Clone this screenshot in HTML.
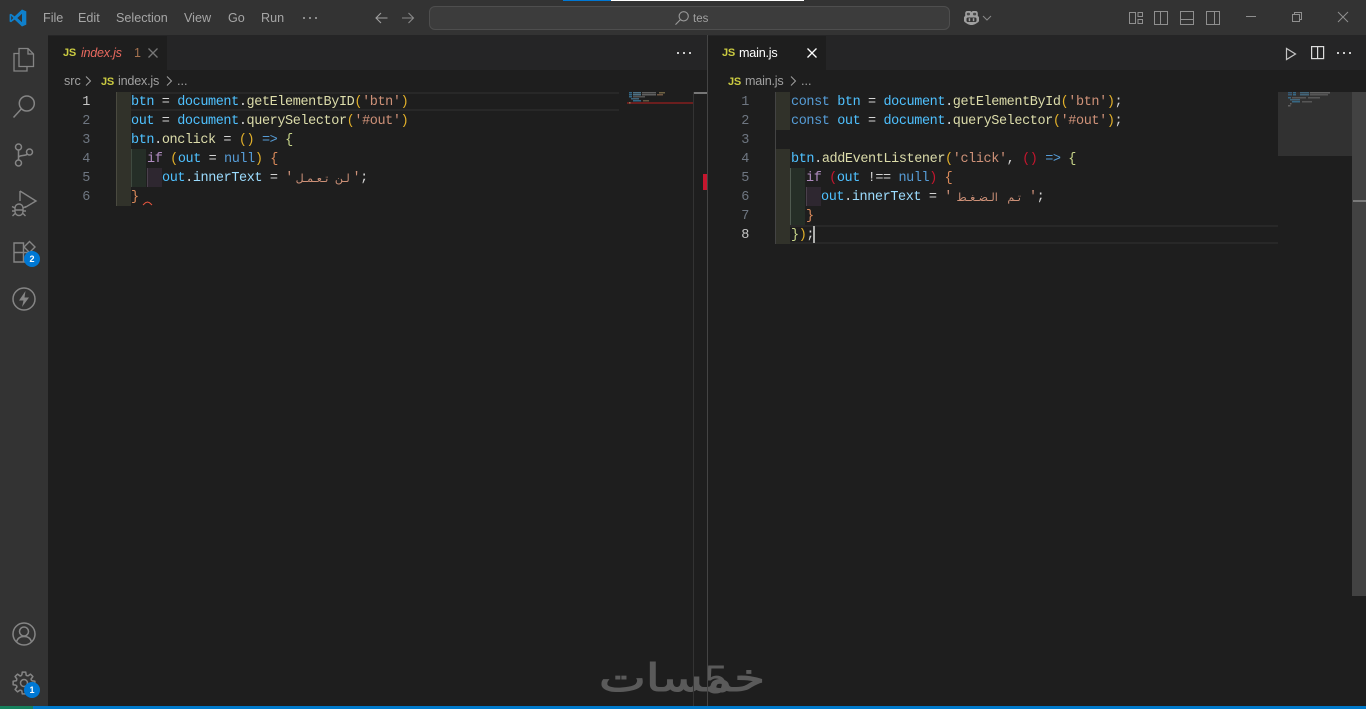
<!DOCTYPE html>
<html lang="en"><head><meta charset="utf-8"><title>VS Code</title>
<style>
html,body{margin:0;padding:0;background:#1e1e1e;width:1366px;height:709px;overflow:hidden}
#r{position:relative;width:1366px;height:709px;overflow:hidden;font-family:"Liberation Sans",sans-serif;font-size:12.6px;color:#a6a6a6}
.a{position:absolute}
.t{position:absolute;white-space:pre;line-height:18px}
.c{position:absolute;white-space:pre;font-family:"Liberation Mono",monospace;font-size:13.5px;letter-spacing:-.4px;line-height:19px;height:19px;color:#d4d4d4;margin-top:1px}
.n{position:absolute;width:30px;text-align:right;font-family:"Liberation Mono",monospace;font-size:13.5px;letter-spacing:-.4px;line-height:19px;color:#6e7681;margin-top:1px}
.ar{display:inline-block;box-sizing:border-box;font-family:"DejaVu Sans",sans-serif;font-size:11.5px;letter-spacing:0;color:#ce9178;text-align:center;vertical-align:top;height:19px;overflow:hidden}
.v{color:#4fc1ff}.p{color:#9cdcfe}.f{color:#dcdcaa}.k{color:#569cd6}.s{color:#ce9178}.g{color:#e2b02a}.r{color:#c5162e}.o{color:#d9895a}.y{color:#c9d68a}.m{color:#b08cc0}.w{color:#d4d4d4}
.js{position:absolute;font:bold 11px/12px "Liberation Sans",sans-serif;color:#cbcb41;letter-spacing:-.3px}
svg{position:absolute;overflow:visible;fill:none}
.b{position:absolute;border-radius:50%;background:#0078d4;color:#fff;width:16px;height:16px;text-align:center;font:bold 9px/16px "Liberation Sans",sans-serif}
</style></head><body><div id="r">
<!-- chrome -->
<div class="a" style="left:0;top:0;width:1366px;height:35px;background:#333"></div>
<div class="a" style="left:0;top:35px;width:48px;height:671px;background:#333"></div>
<div class="a" style="left:48px;top:35px;width:1318px;height:35px;background:#252526"></div>
<div class="a" style="left:48px;top:36px;width:119px;height:34px;background:#1e1e1e"></div>
<div class="a" style="left:708px;top:36px;width:118px;height:34px;background:#1e1e1e"></div>
<div class="a" style="left:707px;top:35px;width:1px;height:671px;background:#444"></div>
<div class="a" style="left:0;top:706px;width:1366px;height:3px;background:#007acc"></div>
<div class="a" style="left:0;top:706px;width:33px;height:3px;background:#16825d"></div>
<div class="a" style="left:563px;top:0;width:48px;height:1px;background:#0078d4"></div>
<div class="a" style="left:611px;top:0;width:193px;height:1px;background:#fff"></div>

<!-- logo -->
<svg style="left:9px;top:9px" width="18" height="18" viewBox="0 0 18 18"><path d="M13 .5 17.300 2.400V15.600L13 17.500 5.600 10.600 2 13.300.6 12.600V5.400L2 4.700 5.600 7.400Z" fill="#0f80cc"/><path d="M13 4.800 8.300 9 13 13.200Z" fill="#333"/><path d="M2.200 6.700V11.300L4.300 9Z" fill="#333"/></svg>

<!-- menu -->
<div class="t" style="left:43px;top:9px">File</div>
<div class="t" style="left:78px;top:9px">Edit</div>
<div class="t" style="left:116px;top:9px">Selection</div>
<div class="t" style="left:184px;top:9px">View</div>
<div class="t" style="left:228px;top:9px">Go</div>
<div class="t" style="left:261px;top:9px">Run</div>
<svg style="left:303px;top:17px" width="14" height="3"><g fill="#8c8c8c"><rect x="0" y="0" width="2" height="2"/><rect x="6" y="0" width="2" height="2"/><rect x="12" y="0" width="2" height="2"/></g></svg>

<svg style="left:375px;top:11px" width="14" height="14" viewBox="0 0 14 14" stroke="#a0a0a0" stroke-width="1.100"><path d="M12.500 7H1M6 2 1 7l5 5"/></svg>
<svg style="left:401px;top:11px" width="14" height="14" viewBox="0 0 14 14" stroke="#8a8a8a" stroke-width="1.100"><path d="M1 7h11.500M7.500 2l5 5-5 5"/></svg>

<!-- search -->
<div class="a" style="left:429px;top:6px;width:519px;height:22px;background:#3c3c3c;border:1px solid #4e4e4e;border-radius:6px"></div>
<svg style="left:674px;top:10px" width="16" height="16" viewBox="0 0 16 16" stroke="#999" stroke-width="1.100"><circle cx="9.700" cy="6.300" r="4.600"/><path d="M6.400 9.600 1.500 14.600"/></svg>
<div class="t" style="left:693px;top:10px;font-size:11.500px;color:#a0a0a0">tes</div>

<!-- copilot -->
<svg style="left:963px;top:10px" width="17" height="16" viewBox="0 0 17 16"><path d="M4.500 1h2.300c.8 0 1.300.4 1.700 1 .4-.6.900-1 1.700-1h2.300c1.500 0 2.300 1 2.300 2.400v2.600c.8.400 1.200 1 1.200 1.800v3c0 .6-.3 1-.8 1.300C13.500 13.500 11 15 8.500 15S3.500 13.500 1.800 12.100C1.300 11.800 1 11.400 1 10.800v-3C1 7 1.400 6.400 2.200 6V3.400C2.200 2 3 1 4.500 1Z" fill="#a0a0a0"/><rect x="3.800" y="2.800" width="3.200" height="2.600" rx="1" fill="#4a4a4a"/><rect x="10" y="2.800" width="3.200" height="2.600" rx="1" fill="#4a4a4a"/><rect x="3.500" y="7.500" width="10" height="4.500" rx="1.500" fill="#333"/><rect x="5.700" y="8.200" width="1.500" height="3" fill="#a0a0a0"/><rect x="9.800" y="8.200" width="1.500" height="3" fill="#a0a0a0"/></svg>
<svg style="left:982px;top:15px" width="10" height="6" viewBox="0 0 10 6" stroke="#8a8a8a"><path d="M1 1l4 4 4-4"/></svg>

<!-- layout icons -->
<svg style="left:1129px;top:11px" width="14" height="14" viewBox="0 0 14 14" stroke="#8f8f8f"><rect x=".5" y="1.500" width="6" height="11"/><rect x="9" y="1.500" width="4.500" height="4"/><rect x="9" y="8.500" width="4.500" height="4"/></svg>
<svg style="left:1154px;top:11px" width="14" height="14" viewBox="0 0 14 14" stroke="#8f8f8f"><rect x=".5" y=".5" width="13" height="13"/><path d="M6.500 .5v13"/></svg>
<svg style="left:1180px;top:11px" width="14" height="14" viewBox="0 0 14 14" stroke="#8f8f8f"><rect x=".5" y=".5" width="13" height="13"/><path d="M.5 8.500h13"/></svg>
<svg style="left:1206px;top:11px" width="14" height="14" viewBox="0 0 14 14" stroke="#8f8f8f"><rect x=".5" y=".5" width="13" height="13"/><path d="M8.500 .5v13"/></svg>
<!-- window buttons -->
<svg style="left:1246px;top:16px" width="10" height="2"><path d="M0 .5h10" stroke="#8f8f8f"/></svg>
<svg style="left:1292px;top:12px" width="10" height="10" viewBox="0 0 10 10" stroke="#8f8f8f"><rect x=".5" y="2.500" width="7" height="7"/><path d="M2.500 2.500V.5h7v7h-2"/></svg>
<svg style="left:1338px;top:12px" width="10" height="10" viewBox="0 0 10 10" stroke="#8f8f8f"><path d="M0 0l10 10M10 0 0 10"/></svg>

<!-- activity bar -->
<svg style="left:12px;top:46px" width="24" height="26" viewBox="0 0 24 26" stroke="#858585" stroke-width="1.300"><path d="M7 2.500h9l5.500 5.500v12.500H7Z" fill="#333"/><path d="M16 2.500V8h5.500"/><path d="M7 7.500H2V25h13v-4.500"/></svg>
<svg style="left:12px;top:94px" width="24" height="25" viewBox="0 0 24 25" stroke="#858585" stroke-width="1.500"><circle cx="14.800" cy="9.500" r="7.500"/><path d="M9.500 14.800 1.500 23.500"/></svg>
<svg style="left:12px;top:142px" width="24" height="26" viewBox="0 0 24 26" stroke="#858585" stroke-width="1.500"><circle cx="6.500" cy="5" r="3"/><circle cx="6.500" cy="21" r="3"/><circle cx="17.500" cy="10" r="3"/><path d="M6.500 8v10M6.500 15.500c1-3 7-1 9-3.500"/></svg>
<svg style="left:11px;top:190px" width="26" height="28" viewBox="0 0 26 28" stroke="#858585" stroke-width="1.400"><path d="M9 1v10M9 1l16 10-11 6.500"/><path d="M4 18a4 4 0 0 1 8 0v3.500a4 4 0 0 1-8 0Z"/><path d="M1 16.500 4 18M15 16.500 12 18M1 21h3M12 21h3M1.500 26 4 23.500M14.500 26 12 23.500M4.500 20h7"/></svg>
<svg style="left:13px;top:240px" width="24" height="24" viewBox="0 0 24 24" stroke="#858585" stroke-width="1.400"><path d="M1 3h9.500v19H1ZM1 12.500h19.500V22h-10"/><path d="M16.500 1.500 22 7l-5.500 5.500L11 7Z"/></svg>
<div class="b" style="left:24px;top:251px">2</div>
<svg style="left:12px;top:287px" width="24" height="24" viewBox="0 0 24 24"><circle cx="12" cy="12" r="11" stroke="#858585" stroke-width="1.500"/><path d="M13.500 4 7 13.500h4.500L10 20l7-9.500h-4.500Z" fill="#858585"/></svg>
<svg style="left:12px;top:622px" width="24" height="24" viewBox="0 0 24 24" stroke="#858585" stroke-width="1.500"><circle cx="12" cy="12" r="11"/><circle cx="12" cy="9.500" r="4.500"/><path d="M4.500 20c1-4 4-5.500 7.500-5.500s6.500 1.500 7.500 5.500"/></svg>
<svg style="left:12px;top:671px" width="24" height="24" viewBox="0 0 24 24" stroke="#858585" stroke-width="1.500" stroke-linejoin="round">
<g><path d="M19.690 9.790 22.860 10.280V13.720L19.690 14.210 19 15.880"/><path transform="rotate(45 12 12)" d="M19.690 9.790 22.860 10.280V13.720L19.690 14.210 19 15.880"/><path transform="rotate(90 12 12)" d="M19.690 9.790 22.860 10.280V13.720L19.690 14.210 19 15.880"/><path transform="rotate(135 12 12)" d="M19.690 9.790 22.860 10.280V13.720L19.690 14.210 19 15.880"/><path transform="rotate(180 12 12)" d="M19.690 9.790 22.860 10.280V13.720L19.690 14.210 19 15.880"/><path transform="rotate(225 12 12)" d="M19.690 9.790 22.860 10.280V13.720L19.690 14.210 19 15.880"/><path transform="rotate(270 12 12)" d="M19.690 9.790 22.860 10.280V13.720L19.690 14.210 19 15.880"/><path transform="rotate(315 12 12)" d="M19.690 9.790 22.860 10.280V13.720L19.690 14.210 19 15.880"/></g>
<circle cx="12" cy="12" r="3.500"/></svg>
<div class="b" style="left:24px;top:682px">1</div>

<!-- tabs left -->
<div class="js" style="left:63px;top:47px">JS</div>
<div class="t" style="left:81px;top:44px;font-style:italic;color:#e8695f;letter-spacing:-.25px">index.js</div>
<div class="t" style="left:134px;top:44px;color:#a5724f;font-size:12.500px">1</div>
<svg style="left:148px;top:48px" width="10" height="10" viewBox="0 0 10 10" stroke="#777" stroke-width="1.300"><path d="M.5.5l9 9M9.500.5l-9 9"/></svg>
<svg style="left:677px;top:52px" width="14" height="2"><g fill="#ccc"><rect width="2" height="2"/><rect x="6" width="2" height="2"/><rect x="12" width="2" height="2"/></g></svg>
<!-- tabs right -->
<div class="js" style="left:722px;top:47px">JS</div>
<div class="t" style="left:739px;top:44px;color:#fff;letter-spacing:-.2px">main.js</div>
<svg style="left:807px;top:48px" width="10" height="10" viewBox="0 0 10 10" stroke="#fff" stroke-width="1.300"><path d="M.5.5l9 9M9.500.5l-9 9"/></svg>
<svg style="left:1285px;top:47px" width="12" height="14" viewBox="0 0 12 14" stroke="#c5c5c5" stroke-width="1.200"><path d="M1.500 1.500v11l9-5.500Z"/></svg>
<svg style="left:1311px;top:46px" width="14" height="14" viewBox="0 0 14 14" stroke="#ddd" stroke-width="1.200"><rect x=".6" y=".6" width="12" height="12"/><path d="M6.600 .6v12"/></svg>
<svg style="left:1337px;top:52px" width="14" height="2"><g fill="#ccc"><rect width="2" height="2"/><rect x="6" width="2" height="2"/><rect x="12" width="2" height="2"/></g></svg>

<!-- breadcrumbs -->
<div class="t" style="left:64px;top:72px;color:#a0a0a0">src</div>
<svg style="left:85px;top:76px" width="6" height="10" viewBox="0 0 6 10" stroke="#a0a0a0"><path d="M1 .5 5.500 5 1 9.500"/></svg>
<div class="js" style="left:101px;top:76px">JS</div>
<div class="t" style="left:118px;top:72px;color:#a0a0a0;letter-spacing:-.2px">index.js</div>
<svg style="left:166px;top:76px" width="6" height="10" viewBox="0 0 6 10" stroke="#a0a0a0"><path d="M1 .5 5.500 5 1 9.500"/></svg>
<div class="t" style="left:177px;top:72px;color:#a0a0a0">...</div>
<div class="js" style="left:728px;top:76px">JS</div>
<div class="t" style="left:745px;top:72px;color:#a0a0a0;letter-spacing:-.2px">main.js</div>
<svg style="left:790px;top:76px" width="6" height="10" viewBox="0 0 6 10" stroke="#a0a0a0"><path d="M1 .5 5.500 5 1 9.500"/></svg>
<div class="t" style="left:801px;top:72px;color:#a0a0a0">...</div>

<!-- current line borders -->
<div class="a" style="left:116px;top:92px;width:503px;height:2px;background:#282828"></div>
<div class="a" style="left:116px;top:109px;width:503px;height:2px;background:#282828"></div>
<div class="a" style="left:775px;top:225px;width:503px;height:2px;background:#282828"></div>
<div class="a" style="left:775px;top:242px;width:503px;height:2px;background:#282828"></div>

<!-- indent bands left -->
<div class="a" style="left:116px;top:92px;width:15px;height:114px;background:#31322a"></div>
<div class="a" style="left:116px;top:92px;width:1px;height:114px;background:#4a4a40"></div>
<div class="a" style="left:131px;top:149px;width:15px;height:38px;background:#252e27"></div>
<div class="a" style="left:131px;top:149px;width:1px;height:38px;background:#3f4a40"></div>
<div class="a" style="left:147px;top:168px;width:15px;height:19px;background:#2e2730"></div>
<div class="a" style="left:147px;top:168px;width:1px;height:19px;background:#4a404c"></div>
<!-- indent bands right -->
<div class="a" style="left:775px;top:92px;width:1px;height:152px;background:#444"></div>
<div class="a" style="left:776px;top:92px;width:14px;height:38px;background:#31322a"></div>
<div class="a" style="left:776px;top:149px;width:14px;height:95px;background:#31322a"></div>
<div class="a" style="left:790px;top:168px;width:15px;height:57px;background:#252e27"></div>
<div class="a" style="left:790px;top:168px;width:1px;height:57px;background:#4f5a50"></div>
<div class="a" style="left:806px;top:187px;width:15px;height:19px;background:#2e2730"></div>
<div class="a" style="left:806px;top:187px;width:1px;height:19px;background:#4a404c"></div>

<!-- line numbers left -->
<div class="n" style="left:60px;top:92px;color:#c6c6c6">1</div>
<div class="n" style="left:60px;top:111px">2</div>
<div class="n" style="left:60px;top:130px">3</div>
<div class="n" style="left:60px;top:149px">4</div>
<div class="n" style="left:60px;top:168px">5</div>
<div class="n" style="left:60px;top:187px">6</div>
<!-- code left -->
<div class="c" style="left:131px;top:92px"><span class="v">btn</span> = <span class="v">document</span>.<span class="f">getElementByID</span><span class="g">(</span><span class="s">'btn'</span><span class="g">)</span></div>
<div class="c" style="left:131px;top:111px"><span class="v">out</span> = <span class="v">document</span>.<span class="f">querySelector</span><span class="g">(</span><span class="s">'#out'</span><span class="g">)</span></div>
<div class="c" style="left:131px;top:130px"><span class="v">btn</span>.<span class="f">onclick</span> = <span class="g">()</span> <span class="k">=&gt;</span> <span class="y">{</span></div>
<div class="c" style="left:147px;top:149px"><span class="m">if</span> <span class="g">(</span><span class="v">out</span> = <span class="k">null</span><span class="g">)</span> <span class="o">{</span></div>
<div class="c" style="left:162px;top:168px"><span class="v">out</span>.<span class="p">innerText</span> = <span class="s">'</span><span class="ar" style="width:59.500px;word-spacing:3px;font-size:11px" dir="rtl">لـن تـعـمـل</span><span class="s">'</span>;</div>
<div class="c" style="left:131px;top:187px"><span class="o">}</span></div>
<svg style="left:143px;top:202px" width="9" height="3" viewBox="0 0 9 3" stroke="#e8563f"><path d="M0 3 2.500 .7 4.500 0 6.500 .7 9 3"/></svg>

<!-- minimap left -->
<div class="a" style="left:627px;top:102px;width:66px;height:2px;background:#6b1e1e"></div>
<svg style="left:629px;top:92px" width="40" height="14" viewBox="0 0 40 14"><g opacity=".75"><rect x="0" y="0" width="3" height="1.500" fill="#3a80a8"/><rect x="4" y="0" width="8" height="1.500" fill="#5e8fa8"/><rect x="13" y="0" width="14" height="1.500" fill="#777"/><rect x="30" y="0" width="6" height="1.500" fill="#8a7a50"/><rect x="0" y="2" width="3" height="1.500" fill="#3a80a8"/><rect x="4" y="2" width="8" height="1.500" fill="#5e8fa8"/><rect x="13" y="2" width="14" height="1.500" fill="#777"/><rect x="28" y="2" width="6" height="1.500" fill="#8a6a50"/><rect x="0" y="4" width="3" height="1.500" fill="#3a80a8"/><rect x="4" y="4" width="12" height="1.500" fill="#666"/><rect x="2" y="6" width="8" height="1.500" fill="#4a7a96"/><rect x="4" y="8" width="8" height="1.500" fill="#3a80a8"/><rect x="14" y="8" width="6" height="1.500" fill="#7a6a50"/><rect x="0" y="10" width="1.500" height="1.500" fill="#996"/></g></svg>
<!-- scrollbar left -->
<div class="a" style="left:693px;top:92px;width:1px;height:614px;background:#333"></div>
<div class="a" style="left:694px;top:92px;width:13px;height:2px;background:#777"></div>
<div class="a" style="left:703px;top:174px;width:4px;height:16px;background:#c5162e"></div>

<!-- line numbers right -->
<div class="n" style="left:719px;top:92px">1</div>
<div class="n" style="left:719px;top:111px">2</div>
<div class="n" style="left:719px;top:130px">3</div>
<div class="n" style="left:719px;top:149px">4</div>
<div class="n" style="left:719px;top:168px">5</div>
<div class="n" style="left:719px;top:187px">6</div>
<div class="n" style="left:719px;top:206px">7</div>
<div class="n" style="left:719px;top:225px;color:#c6c6c6">8</div>
<!-- code right -->
<div class="c" style="left:791px;top:92px"><span class="k">const</span> <span class="v">btn</span> = <span class="v">document</span>.<span class="f">getElementById</span><span class="g">(</span><span class="s">'btn'</span><span class="g">)</span>;</div>
<div class="c" style="left:791px;top:111px"><span class="k">const</span> <span class="v">out</span> = <span class="v">document</span>.<span class="f">querySelector</span><span class="g">(</span><span class="s">'#out'</span><span class="g">)</span>;</div>
<div class="c" style="left:791px;top:149px"><span class="v">btn</span>.<span class="f">addEventListener</span><span class="g">(</span><span class="s">'click'</span>, <span class="r">()</span> <span class="k">=&gt;</span> <span class="y">{</span></div>
<div class="c" style="left:806px;top:168px"><span class="m">if</span> <span class="r">(</span><span class="v">out</span> !== <span class="k">null</span><span class="r">)</span> <span class="o">{</span></div>
<div class="c" style="left:821px;top:187px"><span class="v">out</span>.<span class="p">innerText</span> = <span class="s">'</span><span class="ar" style="width:77px;word-spacing:6px;font-size:11px;padding-right:8px;text-align:right" dir="rtl">تـم الـضـغـط</span><span class="s">'</span>;</div>
<div class="c" style="left:806px;top:206px"><span class="o">}</span></div>
<div class="c" style="left:791px;top:225px"><span class="y">}</span><span class="g">)</span>;</div>
<div class="a" style="left:813px;top:226px;width:2px;height:17px;background:#aeafad"></div>

<!-- minimap right -->
<div class="a" style="left:1278px;top:92px;width:74px;height:64px;background:#313131"></div>
<svg style="left:1288px;top:92px" width="44" height="16" viewBox="0 0 44 16"><g opacity=".7"><rect x="0" y="0" width="4" height="1.500" fill="#3a6a90"/><rect x="5" y="0" width="3" height="1.500" fill="#3a80a8"/><rect x="12" y="0" width="9" height="1.500" fill="#4a7a96"/><rect x="22" y="0" width="20" height="1.500" fill="#777"/><rect x="0" y="2" width="4" height="1.500" fill="#3a6a90"/><rect x="5" y="2" width="3" height="1.500" fill="#3a80a8"/><rect x="12" y="2" width="9" height="1.500" fill="#4a7a96"/><rect x="22" y="2" width="18" height="1.500" fill="#666"/><rect x="0" y="5" width="3" height="1.500" fill="#3a80a8"/><rect x="4" y="5" width="14" height="1.500" fill="#666"/><rect x="20" y="5" width="12" height="1.500" fill="#666"/><rect x="2" y="7" width="10" height="1.500" fill="#4a7a96"/><rect x="4" y="9" width="8" height="1.500" fill="#3a80a8"/><rect x="14" y="9" width="10" height="1.500" fill="#666"/><rect x="2" y="11" width="1.500" height="1.500" fill="#777"/><rect x="0" y="13" width="2.500" height="1.500" fill="#777"/></g></svg>
<!-- scrollbar right -->
<div class="a" style="left:1352px;top:92px;width:14px;height:504px;background:#424242"></div>
<div class="a" style="left:1353px;top:200px;width:13px;height:2px;background:#7a7a7a"></div>

<!-- watermark -->
<svg style="left:598px;top:650px" width="172" height="56" viewBox="0 0 172 56"><text x="84" y="41" text-anchor="middle" font-family="DejaVu Sans, sans-serif" font-size="38" fill="#5a5a5a" stroke="#5a5a5a" stroke-width="1.100" textLength="166" lengthAdjust="spacingAndGlyphs" direction="rtl">خمسات</text><text x="118" y="43" text-anchor="middle" font-family="Liberation Sans, sans-serif" font-size="40" fill="#5a5a5a">5</text></svg>
<div class="a" style="left:693px;top:640px;width:1px;height:66px;background:#333"></div>
<div class="a" style="left:707px;top:640px;width:1px;height:66px;background:#444"></div>
</div></body></html>
